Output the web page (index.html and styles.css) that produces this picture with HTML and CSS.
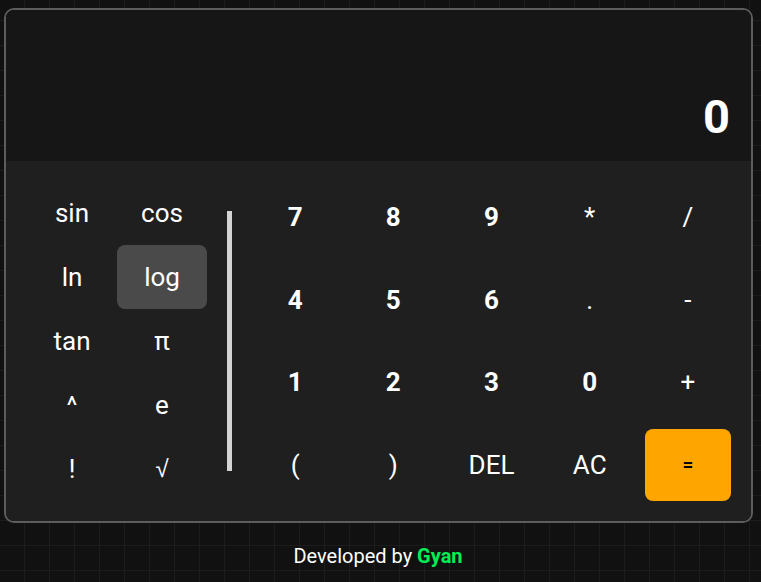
FILE: index.html
```html
<!DOCTYPE html>
<html>
<head>
<meta charset="utf-8">
<link rel="stylesheet" href="styles.css">
</head>
<body>
<div class="calc">
  <div class="display"><span class="value">0</span></div>
  <div class="keypad">
    <div class="sci">
      <button class="key fn">sin</button>
      <button class="key fn">cos</button>
      <button class="key fn">ln</button>
      <button class="key fn hover">log</button>
      <button class="key fn">tan</button>
      <button class="key fn">π</button>
      <button class="key fn">^</button>
      <button class="key fn">e</button>
      <button class="key fn">!</button>
      <button class="key fn root">√</button>
    </div>
    <div class="bar"></div>
    <div class="nums">
      <button class="key num">7</button>
      <button class="key num">8</button>
      <button class="key num">9</button>
      <button class="key op">*</button>
      <button class="key op">/</button>
      <button class="key num">4</button>
      <button class="key num">5</button>
      <button class="key num">6</button>
      <button class="key op">.</button>
      <button class="key op">-</button>
      <button class="key num">1</button>
      <button class="key num">2</button>
      <button class="key num">3</button>
      <button class="key num">0</button>
      <button class="key op">+</button>
      <button class="key fn">(</button>
      <button class="key fn">)</button>
      <button class="key fn">DEL</button>
      <button class="key fn">AC</button>
      <button class="key equals">=</button>
    </div>
  </div>
</div>
<footer class="footer">Developed by <span class="name">Gyan</span></footer>
</body>
</html>
```
FILE: styles.css
```css
html, body {
  margin: 0;
  padding: 0;
}
body {
  background-color: #111111;
  background-image:
    linear-gradient(to right, #1c1c1c 1px, transparent 1px),
    linear-gradient(to bottom, #1c1c1c 1px, transparent 1px);
  background-size: 25px 25px;
  background-position: -1px -5px;
  font-family: Roboto, "Liberation Sans", sans-serif;
  color: #ffffff;
  min-height: 582px;
}
.calc {
  margin: 8px 0 0 4px;
  width: 745px;
  border: 2px solid #5c5c5c;
  border-radius: 10px;
  overflow: hidden;
}
.display {
  height: 151px;
  background: #161616;
  display: flex;
  justify-content: flex-end;
  align-items: flex-end;
  padding: 0 21px 21px 21px;
  box-sizing: border-box;
}
.value {
  font-size: 47px;
  font-weight: 700;
  line-height: 1;
}
.keypad {
  background: #1f1f1f;
  padding: 20px 20px 20px 21px;
  display: flex;
  align-items: center;
  gap: 20px;
}
.sci {
  display: grid;
  grid-template-columns: 90px 90px;
  grid-auto-rows: 64px;
}
.bar {
  width: 5px;
  height: 260px;
  background: #d4d4d4;
}
.nums {
  flex: 1;
  display: grid;
  grid-template-columns: repeat(5, 1fr);
  grid-template-rows: repeat(4, 72.5px);
  column-gap: 12px;
  row-gap: 10px;
}
.key {
  border: none;
  background: transparent;
  color: #ffffff;
  font-family: Roboto, "Liberation Sans", sans-serif;
  padding: 0;
  margin: 0;
  border-radius: 8px;
}
.fn {
  font-size: 26px;
  font-weight: 400;
}
.root {
  font-family: "DejaVu Sans", sans-serif;
  font-weight: 200;
  font-size: 24px;
}
.num {
  font-size: 26px;
  font-weight: 700;
}
.op {
  font-size: 26px;
  font-weight: 400;
}
.hover {
  background: #4a4a4a;
}
.equals {
  background: #ffa500;
  color: #000000;
  font-size: 19px;
  font-weight: 700;
}
.footer {
  text-align: center;
  font-size: 20px;
  padding: 21px 5px 0 0;
}
.name {
  color: #00ee55;
  font-weight: 700;
}
```
